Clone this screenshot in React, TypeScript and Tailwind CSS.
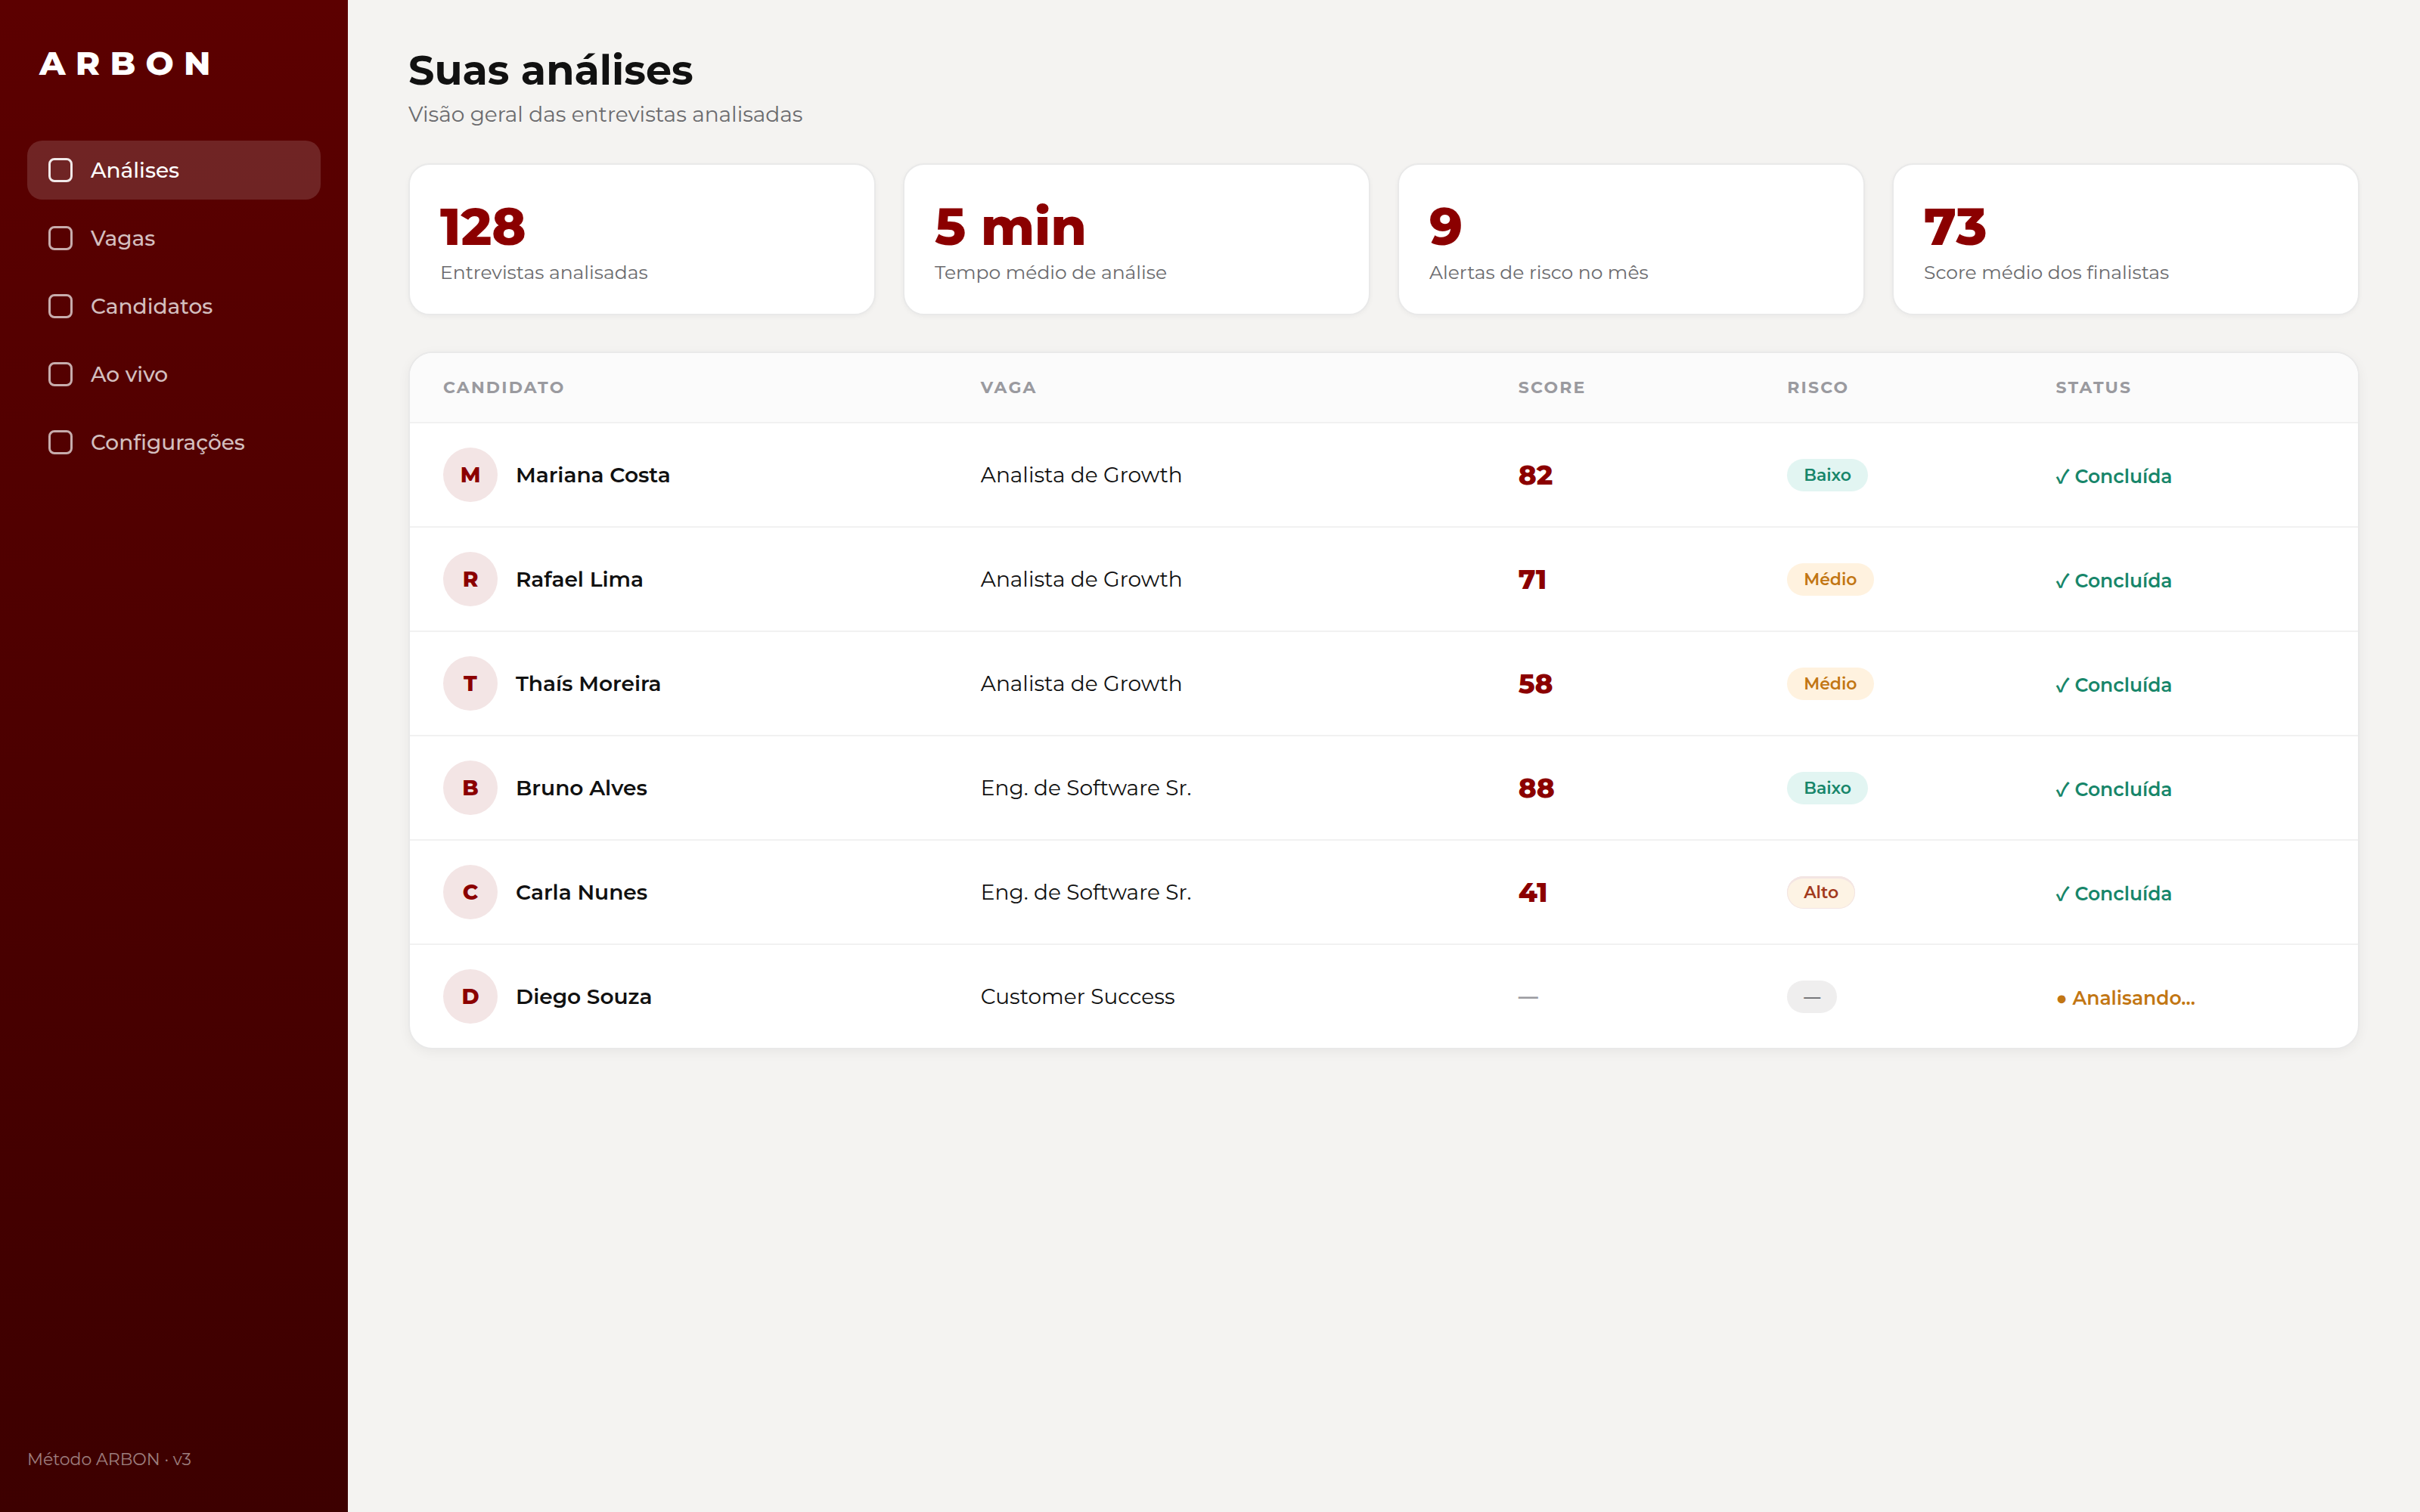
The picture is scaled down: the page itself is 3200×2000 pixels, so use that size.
import clsx from 'clsx';

type Risk = 'baixo' | 'medio' | 'alto' | 'none';

interface Candidate {
  name: string;
  role: string;
  score: number | null;
  risk: Risk;
  done: boolean;
}

const NAV_ITEMS = ['Análises', 'Vagas', 'Candidatos', 'Ao vivo', 'Configurações'];

const STATS = [
  { value: '128', label: 'Entrevistas analisadas' },
  { value: '5 min', label: 'Tempo médio de análise' },
  { value: '9', label: 'Alertas de risco no mês' },
  { value: '73', label: 'Score médio dos finalistas' },
];

const COLUMNS = ['Candidato', 'Vaga', 'Score', 'Risco', 'Status'];

const CANDIDATES: Candidate[] = [
  { name: 'Mariana Costa', role: 'Analista de Growth', score: 82, risk: 'baixo', done: true },
  { name: 'Rafael Lima', role: 'Analista de Growth', score: 71, risk: 'medio', done: true },
  { name: 'Thaís Moreira', role: 'Analista de Growth', score: 58, risk: 'medio', done: true },
  { name: 'Bruno Alves', role: 'Eng. de Software Sr.', score: 88, risk: 'baixo', done: true },
  { name: 'Carla Nunes', role: 'Eng. de Software Sr.', score: 41, risk: 'alto', done: true },
  { name: 'Diego Souza', role: 'Customer Success', score: null, risk: 'none', done: false },
];

const RISK_LABELS: Record<Risk, string> = {
  baixo: 'Baixo',
  medio: 'Médio',
  alto: 'Alto',
  none: '—',
};

const RISK_STYLES: Record<Risk, string> = {
  baixo: 'bg-[#e2f5f2] text-[#17866a]',
  medio: 'bg-[#fff2df] text-[#c27613]',
  alto: 'bg-[#fdf3e4] text-[#a23a1c] shadow-[inset_0_3px_0_#f3e5e3,inset_0_0_0_1px_#f3e5e3]',
  none: 'bg-[#efeeee] text-[#6b6b6e]',
};

function Sidebar() {
  return (
    <aside className="flex w-[460px] shrink-0 flex-col bg-linear-to-b from-[#5c0000] to-[#3d0000] px-9 py-14">
      <div className="mb-19 px-4 text-[44px] font-extrabold tracking-[0.3em] text-white">ARBON</div>
      <nav className="flex flex-col gap-3">
        {NAV_ITEMS.map((item, i) => (
          <a
            key={item}
            className={clsx(
              'flex items-center gap-6 rounded-[20px] px-7 py-[22px] text-[28px] font-medium',
              i === 0 ? 'bg-white/14 text-white' : 'text-white/75'
            )}
          >
            <span className="size-8 rounded-[8px] border-3 border-current opacity-90" />
            {item}
          </a>
        ))}
      </nav>
      <div className="mt-auto text-[22px] text-white/50">Método ARBON · v3</div>
    </aside>
  );
}

function StatCard({ value, label }: { value: string; label: string }) {
  return (
    <div className="rounded-[28px] border-2 border-[#e9e9e9] bg-white p-10 shadow-[0_2px_6px_rgba(0,0,0,0.04)]">
      <div className="text-[68px] font-extrabold text-[#8b0000]">{value}</div>
      <div className="mt-1 text-[25px] text-[#6b6b6e]">{label}</div>
    </div>
  );
}

function CandidateRow({ candidate }: { candidate: Candidate }) {
  const { name, role, score, risk, done } = candidate;
  return (
    <div className="grid grid-cols-[2fr_2fr_1fr_1fr_1fr] items-center border-b-2 border-[#f1f1f1] px-11 py-8 text-[28px] last:border-b-0">
      <div className="flex items-center gap-6 font-semibold">
        <span className="flex size-18 items-center justify-center rounded-full bg-[#f3e5e5] font-extrabold text-[#8b0000]">
          {name[0]}
        </span>
        {name}
      </div>
      <div>{role}</div>
      {score === null ? (
        <div className="text-[26px] font-bold text-[#9a9a9f]">—</div>
      ) : (
        <div className="text-[36px] font-extrabold text-[#8b0000]">{score}</div>
      )}
      <div className="flex">
        <span className={clsx('rounded-full px-[22px] py-2 text-[22px] font-semibold', RISK_STYLES[risk])}>
          {RISK_LABELS[risk]}
        </span>
      </div>
      {/* the check mark only exists in the CJK face, the dot comes from Liberation Sans */}
      <div
        className={clsx(
          "font-['Montserrat','Liberation_Sans','Noto_Sans_CJK_SC',sans-serif] text-[25px] font-semibold",
          done ? 'text-[#17866a]' : 'pt-1 text-[#c27613]'
        )}
      >
        {done ? '✓ Concluída' : '● Analisando…'}
      </div>
    </div>
  );
}

export default function App() {
  return (
    <div className="flex h-[2000px] w-[3200px] bg-[#f4f3f1] font-['Montserrat',sans-serif] leading-[normal] text-[#111111]">
      <Sidebar />
      <main className="flex-1 px-20 pt-[60px]">
        <h1 className="text-[54px] font-bold">Suas análises</h1>
        <p className="mt-2 text-[28px] text-[#6b6b6e]">Visão geral das entrevistas analisadas</p>

        <section className="mt-12 grid grid-cols-4 gap-9">
          {STATS.map((s) => (
            <StatCard key={s.label} value={s.value} label={s.label} />
          ))}
        </section>

        <section className="mt-12 overflow-hidden rounded-[32px] border-2 border-[#e9e9e9] bg-white shadow-[0_4px_16px_rgba(0,0,0,0.05)]">
          <div className="grid grid-cols-[2fr_2fr_1fr_1fr_1fr] border-b-2 border-[#f1f1f1] bg-[#fbfbfb] px-11 py-8 text-[22px] font-bold tracking-[0.1em] text-[#9a9a9f] uppercase">
            {COLUMNS.map((c) => (
              <div key={c}>{c}</div>
            ))}
          </div>
          {CANDIDATES.map((c) => (
            <CandidateRow key={c.name} candidate={c} />
          ))}
        </section>
      </main>
    </div>
  );
}
